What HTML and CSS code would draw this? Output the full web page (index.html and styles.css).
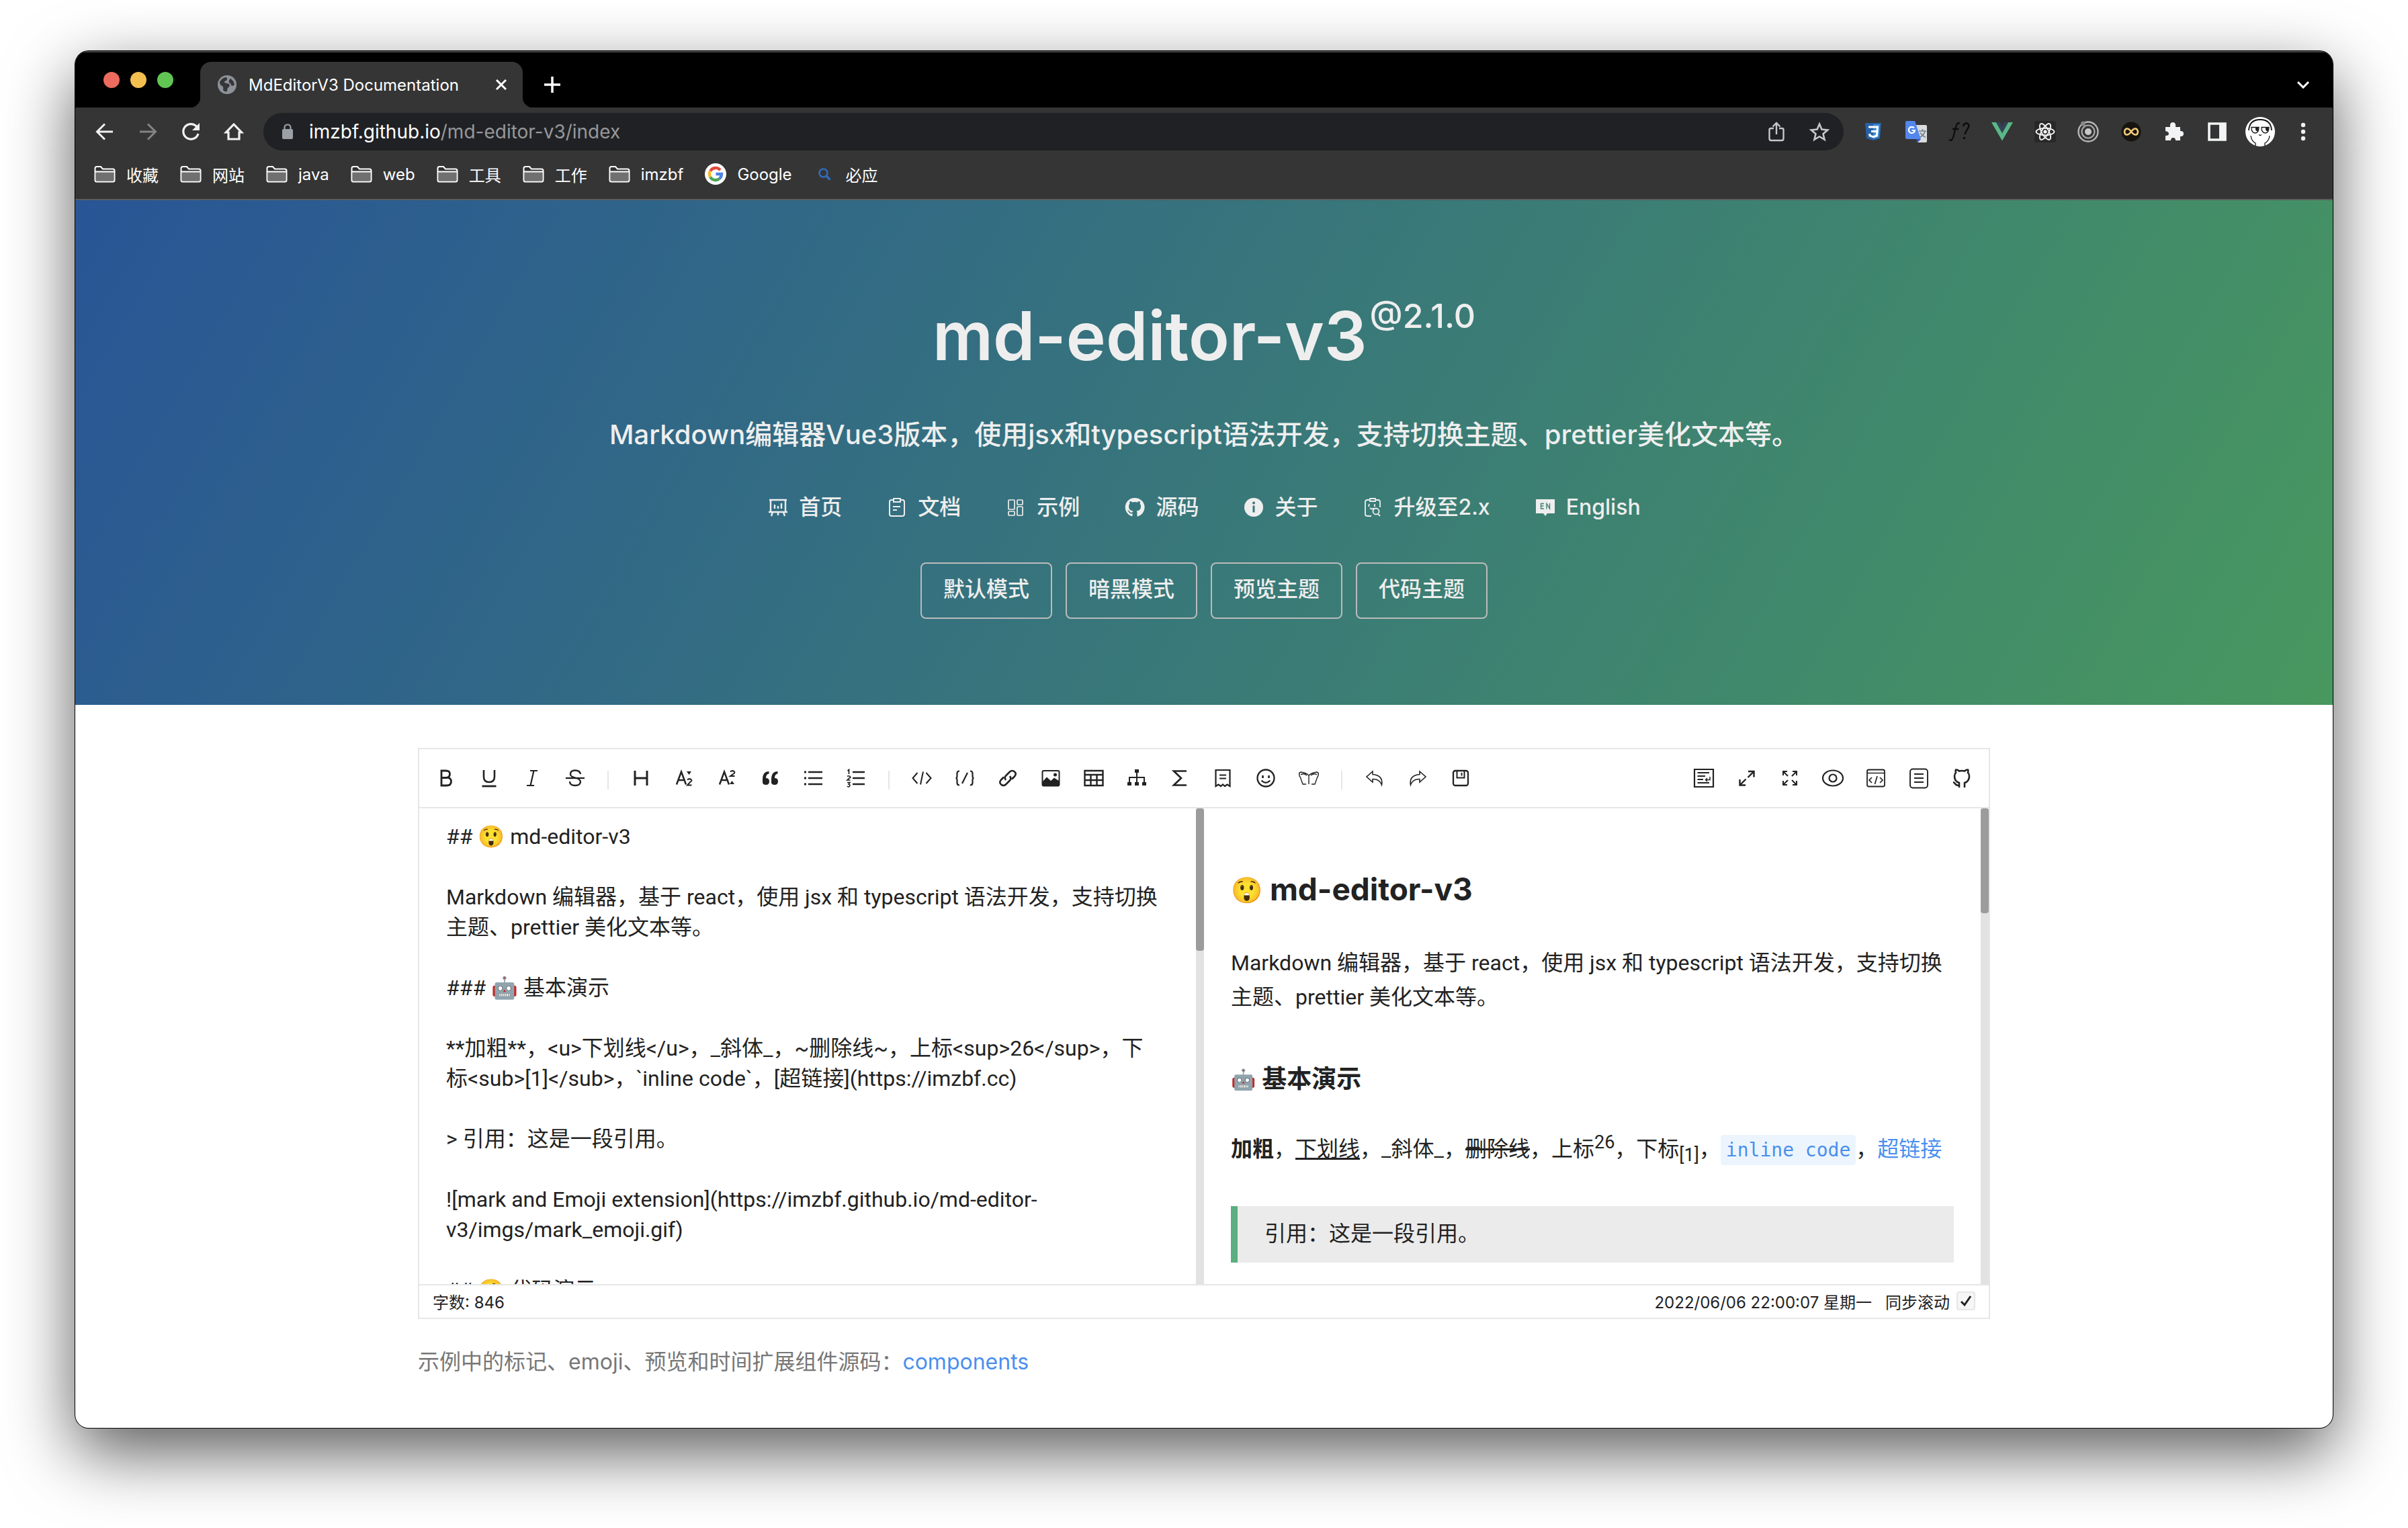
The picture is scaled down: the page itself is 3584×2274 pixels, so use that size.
FILE: index.html
```html
<!DOCTYPE html>
<html lang="zh-CN">
<head>
<meta charset="utf-8">
<title>MdEditorV3 Documentation</title>
<link rel="stylesheet" href="styles.css">
</head>
<body>
<svg class="sprite" aria-hidden="true">
  <symbol id="folder" viewBox="0 0 32 26"><path d="M1.500 22V4.500Q1.500 2 4 2H10L13 5.500H28Q30.500 5.500 30.500 8V22Q30.500 24.500 28 24.500H4Q1.500 24.500 1.500 22Z" fill="#333"/><path d="M3 10H29V23H3Z" fill="#707070"/><path d="M1.500 22V4.500Q1.500 2 4 2H10L13 5.500H28Q30.500 5.500 30.500 8V22Q30.500 24.500 28 24.500H4Q1.500 24.500 1.500 22ZM2 9.500H30" fill="none" stroke="#fff" stroke-width="2"/></symbol>
</svg>
<div class="window">
  <header class="chrome">
    <div class="tabstrip">
      <div class="lights"><span class="light red"></span><span class="light yellow"></span><span class="light green"></span></div>
      <div class="tab">
        <svg class="favicon" viewBox="0 0 28 28"><circle cx="14" cy="14" r="14" fill="#8d9299"/><path d="M3 10Q7 3 13 3Q15 5 13 8Q10 8 10 11Q14 12 17 13Q19 16 16 18Q14 19 14 24Q10 25 8 22Q9 18 7 16Q3 15 3 10ZM19 5Q24 8 25 14Q23 17 20 15Q20 12 17 11Q16 7 19 5Z" fill="#35363a"/></svg>
        <span class="tab-title">MdEditorV3 Documentation</span>
        <button class="plain" aria-label="关闭标签页"><svg width="20" height="20" viewBox="0 0 20 20"><path d="M3 3L17 17M17 3L3 17" stroke="#fff" stroke-width="3"/></svg></button>
      </div>
      <button class="plain newtab" aria-label="新标签页"><svg width="24" height="24" viewBox="0 0 24 24"><path d="M12 0V24M0 12H24" stroke="#fff" stroke-width="3.500"/></svg></button>
      <button class="plain tablist" aria-label="搜索标签页"><svg width="20" height="12" viewBox="0 0 20 12"><path d="M2 2L10 10L18 2" fill="none" stroke="#fff" stroke-width="3"/></svg></button>
    </div>
    <div class="toolbar">
      <button class="nav-btn" aria-label="后退"><svg viewBox="0 0 32 32"><path d="M28 16H5M16 4.500L4.500 16L16 27.500" fill="none" stroke="#f1f1f1" stroke-width="3"/></svg></button>
      <button class="nav-btn" aria-label="前进"><svg viewBox="0 0 32 32"><path d="M4 16H27M16 4.500L27.500 16L16 27.500" fill="none" stroke="#848484" stroke-width="3"/></svg></button>
      <button class="nav-btn" aria-label="刷新"><svg viewBox="0 0 32 32"><path d="M25.500 9.500A11.300 11.300 0 1 0 27 19" fill="none" stroke="#f1f1f1" stroke-width="3.200"/><path d="M29 3V14H18Z" fill="#f1f1f1"/></svg></button>
      <button class="nav-btn" aria-label="主页"><svg viewBox="0 0 32 32"><path d="M8 27V17H4.500L16 5L27.500 17H24V27Z" fill="none" stroke="#f1f1f1" stroke-width="3.200"/></svg></button>
      <div class="omnibox">
        <svg width="16" height="24" viewBox="0 0 16 24"><rect y="8" width="16" height="15" rx="2" fill="#9aa0a6"/><path d="M3.500 9V6Q3.500 1.500 8 1.500T12.500 6V9" fill="none" stroke="#9aa0a6" stroke-width="2.200"/></svg>
        <a class="url" href="#">imzbf.github.io<span class="path">/md-editor-v3/index</span></a>
        <button class="plain" aria-label="分享"><svg width="32" height="32" viewBox="0 0 32 32"><path d="M12 11H8Q5.500 11 5.500 13V26Q5.500 29 8 29H24Q26.500 29 26.500 26V13Q26.500 11 24 11H20M16 20V4M10.500 8.500L16 3L21.500 8.500" fill="none" stroke="#c6c7c8" stroke-width="2.400"/></svg></button>
        <button class="plain" aria-label="收藏"><svg width="32" height="32" viewBox="0 0 32 32"><path d="M16 4.500L19.400 12.600L28.200 13.400L21.500 19.200L23.600 27.800L16 23.200L8.400 27.800L10.500 19.200L3.800 13.400L12.600 12.600Z" fill="none" stroke="#c6c7c8" stroke-width="2.600"/></svg></button>
      </div>
      <div class="extensions">
        <svg viewBox="0 0 32 32"><path d="M4 3H28L26 26L16 29L6 26Z" fill="#2862a8"/><path d="M16 5H26L24.400 24.500L16 27Z" fill="#3d8fd6"/><path d="M9 9H22.500L22 15.500H13M22 15.500L21.300 22L16 23.600L11 22L10.800 19" fill="none" stroke="#fff" stroke-width="3"/></svg>
        <svg viewBox="0 0 32 32"><path d="M12 6H30Q32 6 32 8V30Q32 32 30 32H18Z" fill="#dcdcdc"/><path d="M16 27H23L18 32Z" fill="#3350bb"/><path d="M2 0H14L23 27H2Q0 27 0 25V2Q0 0 2 0Z" fill="#5387ed"/><path d="M13 10.500A4.600 4.600 0 1 0 14 14H9.500" fill="none" stroke="#fff" stroke-width="2.200"/><path d="M20 15H31M25.500 12V15M22 24Q27.500 21 29 15.500M22 17.500Q25 22 30 24.500" fill="none" stroke="#6d8390" stroke-width="1.700"/></svg>
        <svg viewBox="0 0 32 32"><path d="M1 28Q5 31 7.500 23L11 9Q12.500 2 17 3.500M6 12H15" fill="none" stroke="#0d0d0d" stroke-width="2.300"/><path d="M22 8Q23 3 27.500 3.500Q32 5 29.500 10Q26 15 24.500 20" fill="none" stroke="#0d0d0d" stroke-width="2.500"/><circle cx="23.500" cy="25.500" r="1.800" fill="#0d0d0d"/></svg>
        <svg viewBox="0 0 32 32"><path d="M0 2H7L16 18L25 2H32L16 29.500Z" fill="#5ab786"/><path d="M7 2H12.500L16 8.500L19.500 2H25L16 18Z" fill="#34435c"/></svg>
        <svg viewBox="0 0 32 32"><rect width="32" height="32" rx="3" fill="#282828"/><g fill="none" stroke="#f2f2f2" stroke-width="1.900"><ellipse cx="16" cy="16" rx="13.500" ry="5.200"/><ellipse cx="16" cy="16" rx="13.500" ry="5.200" transform="rotate(60 16 16)"/><ellipse cx="16" cy="16" rx="13.500" ry="5.200" transform="rotate(120 16 16)"/></g><circle cx="16" cy="16" r="2.600" fill="#fff"/></svg>
        <svg viewBox="0 0 32 32"><circle cx="16" cy="16" r="5" fill="#c9c9c9"/><circle cx="16" cy="16" r="9.500" fill="none" stroke="#aaa" stroke-width="2.200"/><circle cx="16" cy="16" r="14.500" fill="none" stroke="#b8b8b8" stroke-width="2.400"/><circle cx="8.500" cy="4" r="3.400" fill="#888"/></svg>
        <svg viewBox="0 0 32 32"><circle cx="16" cy="16" r="14.500" fill="#17140f"/><path d="M16 16Q12.500 11 9.500 11.500T6 16Q6.500 20.500 9.500 20.500T16 16Q19.500 11 22.500 11.500T26 16Q25.500 20.500 22.500 20.500T16 16Z" fill="none" stroke="#f0c878" stroke-width="2.600"/></svg>
        <svg viewBox="0 0 32 32"><path d="M3 9H10Q9 2 14 2T18 9H25V15Q30 14.500 30 19T25 23V29H18Q18 25 14.500 25T11 29H3V22Q8 22 8 19T3 15Z" fill="#f1f3f4"/></svg>
        <svg viewBox="0 0 32 32"><path d="M4 4H28V28H4Z" fill="#333" stroke="#f1f3f4" stroke-width="3.600"/><path d="M19 4H29V29H19Z" fill="#f1f3f4"/></svg>
        <svg class="avatar" viewBox="0 0 44 44"><circle cx="22" cy="22" r="22" fill="#fff"/><g fill="none" stroke="#151515" stroke-width="1.300"><path d="M5 20Q6 4 22 4Q38 4 39 20" stroke-width="1.800"/><path d="M9 15.500H20Q20 24 14.500 24T9 15.500ZM24 15.500H35Q35 24 29.500 24T24 15.500ZM20 26.500L22 27.500L24 26.500M8 28Q9 36 15 39V43M36 28Q35 36 29 39V43"/></g><path d="M15 16H19V21Q16 22 15 19ZM30 16H34V21Q31 22 30 19Z" fill="#222"/></svg>
        <svg viewBox="0 0 32 32" fill="#f1f1f1"><circle cx="16" cy="6" r="3.200"/><circle cx="16" cy="16" r="3.200"/><circle cx="16" cy="26" r="3.200"/></svg>
      </div>
    </div>
    <nav class="bookmarks">
      <a href="#"><svg width="32" height="26"><use href="#folder"/></svg>收藏</a>
      <a href="#"><svg width="32" height="26"><use href="#folder"/></svg>网站</a>
      <a href="#"><svg width="32" height="26"><use href="#folder"/></svg>java</a>
      <a href="#"><svg width="32" height="26"><use href="#folder"/></svg>web</a>
      <a href="#"><svg width="32" height="26"><use href="#folder"/></svg>工具</a>
      <a href="#"><svg width="32" height="26"><use href="#folder"/></svg>工作</a>
      <a href="#"><svg width="32" height="26"><use href="#folder"/></svg>imzbf</a>
      <a href="#"><svg width="32" height="32" viewBox="0 0 32 32"><circle cx="16" cy="16" r="16" fill="#fff"/><g fill="none" stroke-width="4.400"><path d="M23 10.200A9 9 0 0 0 8.200 11.500" stroke="#e04a3a"/><path d="M8.200 11.500A9 9 0 0 0 8.200 20.500" stroke="#f3bb2e"/><path d="M8.200 20.500A9 9 0 0 0 21.800 22.900" stroke="#4ba353"/><path d="M21.800 22.900Q25 20 25 16H16.500" stroke="#4e82e8"/></g></svg>Google</a>
      <a href="#"><svg width="32" height="32" viewBox="0 0 32 32"><circle cx="14.500" cy="14.500" r="6" fill="none" stroke="#2f6bbd" stroke-width="2.600"/><path d="M19 19L24.500 24.500" stroke="#2f6bbd" stroke-width="3.400"/></svg>必应</a>
    </nav>
  </header>

  <main>
    <section class="hero">
      <h1>md-editor-v3<sup>@2.1.0</sup></h1>
      <p class="tagline">Markdown编辑器Vue3版本，使用jsx和typescript语法开发，支持切换主题、prettier美化文本等。</p>
      <nav class="links">
        <a href="#"><svg viewBox="0 0 32 32" fill="none" stroke="currentColor" stroke-width="2.400"><path d="M3 5H29M5 5V23H27V5M2 23H30M8 23L6 29M16 23V28M24 23L26 29M11 12V18M16 14V18M21 10V18"/></svg>首页</a>
        <a href="#"><svg viewBox="0 0 32 32" fill="none" stroke="currentColor" stroke-width="2"><path d="M11 5H8Q5 5 5 8V26Q5 29 8 29H24Q27 29 27 26V8Q27 5 24 5H21M11 3H21V8H11ZM10 15H21M10 20H16"/></svg>文档</a>
        <a href="#"><svg viewBox="0 0 32 32" fill="none" stroke="currentColor" stroke-width="1.700"><rect x="5" y="5" width="9" height="14" rx="1"/><rect x="18" y="5" width="8" height="7" rx="1"/><rect x="5" y="22" width="9" height="6" rx="1"/><rect x="18" y="15" width="8" height="13" rx="1"/></svg>示例</a>
        <a href="#"><svg viewBox="0 0 24 24" fill="currentColor"><path d="M12 1.500a10.500 10.500 0 0 0-3.400 20.500c.5.100.8-.3.800-.6v-2.400c-2.800.5-3.500-.7-3.800-1.300-.1-.3-.7-1.300-1.100-1.600-.4-.2-1-.7 0-.7.900 0 1.500.8 1.700 1.200 1 1.700 2.600 1.200 3.300.9.100-.7.400-1.200.7-1.500-2.400-.3-4.900-1.200-4.900-5.200 0-1.100.4-2.100 1.100-2.800-.1-.3-.5-1.400.1-2.800 0 0 .9-.3 3 1.100a10 10 0 0 1 5.200 0c2-1.400 2.900-1.100 2.900-1.100.6 1.400.2 2.500.1 2.800.7.700 1.100 1.700 1.100 2.800 0 4-2.500 4.900-4.900 5.200.4.300.7 1 .7 2v3.500c0 .3.200.7.700.6A10.500 10.500 0 0 0 12 1.500Z"/></svg>源码</a>
        <a href="#"><svg viewBox="0 0 32 32"><circle cx="16" cy="16" r="14" fill="currentColor"/><circle cx="16" cy="9.500" r="2" fill="#39777a"/><path d="M16 13.500V23.500" stroke="#39777a" stroke-width="3"/></svg>关于</a>
        <a href="#"><svg viewBox="0 0 32 32" fill="none" stroke="currentColor" stroke-width="1.800"><path d="M11 5H8Q5 5 5 8V26Q5 29 8 29H14M21 5H24Q27 5 27 8V16M12 3H20V7H12ZM11 11L10 15M19 11V15M12 17Q15 20 18 17"/><circle cx="21" cy="22" r="4.500"/><path d="M24 26L27 29"/></svg>升级至2.x</a>
        <a href="#"><svg viewBox="0 0 32 32"><path d="M2 4H30V25H19L16 29L13 25H2Z" fill="currentColor"/><path d="M14 10.500H9.500V18H14M9.500 14H13.500M18 18.500V10.500L22.500 18V10" fill="none" stroke="#3d8070" stroke-width="1.400"/></svg>English</a>
      </nav>
      <div class="themes">
        <button class="theme">默认模式</button>
        <button class="theme">暗黑模式</button>
        <button class="theme">预览主题</button>
        <button class="theme">代码主题</button>
      </div>
    </section>

    <section class="demo">
      <div class="editor">
        <div class="tools">
          <button class="tool" aria-label="加粗"><svg viewBox="0 0 32 32"><path d="M9 5V27H16.500Q23.500 27 23.500 21T16.500 15.500H9H15.500Q21.500 15 21.500 10T15.500 5Z" stroke-width="2.800"/></svg></button>
          <button class="tool" aria-label="下划线"><svg viewBox="0 0 32 32"><path d="M8 4V14Q8 22 16 22T24 14V4" stroke-width="2.600"/><path d="M5.500 28H26.500" stroke-width="2.800"/></svg></button>
          <button class="tool" aria-label="斜体"><svg viewBox="0 0 32 32"><path d="M13 5H24M8 27H19M18.500 5L13.500 27" stroke-width="2.200"/></svg></button>
          <button class="tool" aria-label="删除线"><svg viewBox="0 0 32 32"><path d="M24 10Q23 4.500 16 4.500T9 10Q9 14 16 15.500T24 21Q24 27 16 27T8 21" stroke-width="2.300"/><path d="M2 16H30" stroke-width="2.300"/></svg></button>
          <span class="divider"></span>
          <button class="tool" aria-label="标题"><svg viewBox="0 0 32 32"><path d="M7 5V27M25 5V27M7 16H25" stroke-width="3"/></svg></button>
          <button class="tool" aria-label="下标"><svg viewBox="0 0 32 32"><path d="M5 25.500L12 6.500L19 25.500M7.500 19H16.500" stroke-width="2.500"/><path d="M21 18.500Q24 16 26.500 18T25 22L21 26.500H27.500" stroke-width="2"/><path d="M20 6H27L23.500 11Z" fill="currentColor" stroke="none"/></svg></button>
          <button class="tool" aria-label="上标"><svg viewBox="0 0 32 32"><path d="M5 25.500L12 6.500L19 25.500M7.500 19H16.500" stroke-width="2.500"/><path d="M21 6.500Q24 4 26.500 6T25 10L21 13H27.500" stroke-width="2"/><path d="M20 25H27L23.500 20Z" fill="currentColor" stroke="none"/></svg></button>
          <button class="tool" aria-label="引用"><svg viewBox="0 0 32 32"><path d="M14.500 6Q5 6 5 18V22Q5 26 10 26T15 21T10 16Q10 10 14.500 9.500ZM27.500 6Q18 6 18 18V22Q18 26 23 26T28 21T23 16Q23 10 27.500 9.500Z" fill="currentColor" stroke="none"/></svg></button>
          <button class="tool" aria-label="无序列表"><svg viewBox="0 0 32 32"><path d="M9 7H30M9 16H30M9 25H30" stroke-width="2.500"/><path d="M3 7H6M3 16H6M3 25H6" stroke-width="3.200"/></svg></button>
          <button class="tool" aria-label="有序列表"><svg viewBox="0 0 32 32"><path d="M11 7H29M11 16H29M11 25H29" stroke-width="2.300"/><path d="M3.500 5L5.500 3.500V10M3 13.500Q5 12 7 13.500T6 16L3 19H7.500M3 22.500H7L5 25Q8 26 6.500 28T3 28" stroke-width="1.700"/></svg></button>
          <span class="divider"></span>
          <button class="tool" aria-label="行内代码"><svg viewBox="0 0 32 32"><path d="M9.500 8L2.500 16L9.500 24M22.500 8L29.500 16L22.500 24M18 6.500L14 25.500" stroke-width="2"/></svg></button>
          <button class="tool" aria-label="块级代码"><svg viewBox="0 0 32 32"><path d="M8 5.500Q4.500 5.500 4.500 9V13Q4.500 16 2.500 16Q4.500 16 4.500 19V23Q4.500 26.500 8 26.500M24 5.500Q27.500 5.500 27.500 9V13Q27.500 16 29.500 16Q27.500 16 27.500 19V23Q27.500 26.500 24 26.500M20 8L12 24" stroke-width="2.200"/></svg></button>
          <button class="tool" aria-label="链接"><svg viewBox="0 0 32 32"><path d="M13 19Q10 15 13.500 12L19 6.500Q22.500 3.500 26 6.500T26 13.500L22 17.500M19 13Q22 17 18.500 20L13 25.500Q9.500 28.500 6 25.500T6 18.500L10 14.500" stroke-width="2.600"/></svg></button>
          <button class="tool" aria-label="图片"><svg viewBox="0 0 32 32"><rect x="3.500" y="5" width="25" height="22.500" rx="2" stroke-width="2"/><path d="M4 21L10 14.500L16 20L21 15.500L28 20V27H4Z" fill="currentColor" stroke="none"/><circle cx="22.500" cy="11" r="2.500" fill="currentColor" stroke="none"/></svg></button>
          <button class="tool" aria-label="表格"><svg viewBox="0 0 32 32"><path d="M2.500 5H29.500V27H2.500ZM2.500 11H29.500M2.500 19H29.500M11.500 11V27M20.500 11V27" stroke-width="2.400"/></svg></button>
          <button class="tool" aria-label="mermaid图"><svg viewBox="0 0 32 32"><path d="M16 7V22M5 23V15H27V23" stroke-width="2"/><path d="M13 3H19V8H13ZM2 22H8V27H2ZM13 22H19V27H13ZM24 22H30V27H24Z" fill="currentColor" stroke="none"/></svg></button>
          <button class="tool" aria-label="公式"><svg viewBox="0 0 32 32"><path d="M26 5.500H7L18 16L7 26.500H26" stroke-width="2.600"/></svg></button>
          <button class="tool" aria-label="标记"><svg viewBox="0 0 32 32"><path d="M5.500 28V4H26.500V28L22.500 25.500L19 28L16 25.500L13 28L9.500 25.500ZM11 11.500H21M11 16.500H21" stroke-width="2.200"/></svg></button>
          <button class="tool" aria-label="emoji"><svg viewBox="0 0 32 32"><circle cx="16" cy="16" r="12.500" stroke-width="2.300"/><path d="M11.500 12V16M20.500 12V16" stroke-width="2.600"/><path d="M9.500 19.500Q16 26 22.500 19.500" stroke-width="2.200"/></svg></button>
          <button class="tool" aria-label="预览"><svg viewBox="0 0 32 32"><path d="M16 12Q12 8 4 7L2 8Q1 12 3.500 15L7 25H12M16 12Q20 8 28 7L30 8Q31 12 28.500 15L25 25H20M16 12V25M4 11Q8 8 13 12M28 11Q24 8 19 12" stroke-width="1.400"/></svg></button>
          <span class="divider"></span>
          <button class="tool" aria-label="后退"><svg viewBox="0 0 32 32"><path d="M13 6L4 14L13 22V17.500Q23 17 26.500 26Q29 12 13 10.500Z" stroke-width="1.600"/></svg></button>
          <button class="tool" aria-label="前进"><svg viewBox="0 0 32 32"><path d="M19 6L28 14L19 22V17.500Q9 17 5.500 26Q3 12 19 10.500Z" stroke-width="1.600"/></svg></button>
          <button class="tool" aria-label="保存"><svg viewBox="0 0 32 32"><rect x="5" y="5" width="22" height="22" rx="3" stroke-width="2.300"/><path d="M10.500 5V15.500H21.500V5M17.500 8V12.500" stroke-width="2"/></svg></button>
          <span class="spacer"></span>
          <button class="tool" aria-label="美化"><svg viewBox="0 0 32 32"><path d="M2 3H30V29H2Z" stroke-width="2.200"/><path d="M6.500 8H24M6.500 13H18M6.500 18H15M6.500 23H24" stroke-width="2"/><path d="M25 14V18.500H19M21 16L18.500 18.500L21 21" stroke-width="1.500"/></svg></button>
          <button class="tool" aria-label="浏览器内全屏"><svg viewBox="0 0 32 32"><path d="M18 6H26.500V14.500M26 6.500L17.500 15M14 26.500H5.500V18M6 26L14.500 17.500" stroke-width="2.400"/></svg></button>
          <button class="tool" aria-label="屏幕全屏"><svg viewBox="0 0 32 32"><path d="M6 12V6H12M6.500 6.500L13 13M20 6H26V12M25.500 6.500L19 13M6 20V26H12M6.500 25.500L13 19M26 20V26H20M25.500 25.500L19 19" stroke-width="2"/></svg></button>
          <button class="tool" aria-label="预览"><svg viewBox="0 0 32 32"><ellipse cx="16" cy="16" rx="15" ry="11.500" stroke-width="2.200"/><circle cx="16" cy="16" r="5.500" stroke-width="2.200"/></svg></button>
          <button class="tool" aria-label="html代码预览"><svg viewBox="0 0 32 32"><rect x="3" y="3.500" width="26" height="25" rx="2.500" stroke-width="1.800"/><path d="M3 8.500H29M10 15L6 19L10 23M22 15L26 19L22 23M18 13L14.500 25" stroke-width="1.700"/></svg></button>
          <button class="tool" aria-label="目录"><svg viewBox="0 0 32 32"><rect x="3" y="2.500" width="26" height="28" rx="4" stroke-width="1.900"/><path d="M9 10H23M9 16H23M9 22H23" stroke-width="1.900"/></svg></button>
          <button class="tool" aria-label="源码地址"><svg viewBox="0 0 32 32"><path d="M12 30V23Q5 21 5 13Q5 9.500 7 8Q6 5 7 3.500Q10 3.500 12 5.500Q16 4.500 20 5.500Q22 3.500 25 3.500Q26 5 25 8Q27 9.500 27 13Q27 21 20 23V30M12 26.500Q8 27.500 6.500 25T3 22" stroke-width="2.600"/></svg></button>
        </div>
        <div class="panes">
          <div class="pane">
            <textarea class="source" wrap="off" spellcheck="false" aria-label="Markdown">
## 😲 md-editor-v3

Markdown 编辑器，基于 react，使用 jsx 和 typescript 语法开发，支持切换
主题、prettier 美化文本等。

### 🤖 基本演示

**加粗**，&lt;u&gt;下划线&lt;/u&gt;，_斜体_，~删除线~，上标&lt;sup&gt;26&lt;/sup&gt;，下
标&lt;sub&gt;[1]&lt;/sub&gt;，`inline code`，[超链接](https://imzbf.cc)

&gt; 引用：这是一段引用。

![mark and Emoji extension](https://imzbf.github.io/md-editor-
v3/imgs/mark_emoji.gif)

## 🤗 代码演示</textarea>
            <div class="track"><div class="thumb thumb-source"></div></div>
          </div>
          <div class="pane">
            <article class="preview">
              <h2><span class="emoji">😲</span> md-editor-v3</h2>
              <p>Markdown 编辑器，基于 react，使用 jsx 和 typescript 语法开发，支持切换<br>主题、prettier 美化文本等。</p>
              <h3><span class="emoji">🤖</span> 基本演示</h3>
              <p class="styles"><strong>加粗</strong>，<u>下划线</u>，_斜体_，<del>删除线</del>，上标<sup>26</sup>，下标<sub>[1]</sub>，<code>inline code</code>，<a href="#">超链接</a></p>
              <blockquote>引用：这是一段引用。</blockquote>
            </article>
            <div class="track"><div class="thumb thumb-preview"></div></div>
          </div>
        </div>
        <footer class="status">
          <span>字数: 846</span>
          <span class="spacer"></span>
          <span>2022/06/06 22:00:07 星期一</span>
          <label class="sync">同步滚动 <input type="checkbox" checked></label>
        </footer>
      </div>
      <p class="note">示例中的标记、emoji、预览和时间扩展组件源码：<a href="#">components</a></p>
    </section>
  </main>
</div>
</body>
</html>
```
FILE: styles.css
```css
* { box-sizing: border-box; }
body {
  margin: 0;
  padding: 76px 112px 148px;
  background: #fff;
  color: #222;
  font-family: Inter, "Noto Sans CJK SC", sans-serif;
}
a { color: inherit; text-decoration: none; }
button { margin: 0; font: inherit; color: inherit; cursor: pointer; }
svg { display: block; flex: none; }
.sprite { width: 0; height: 0; position: absolute; }
.plain { display: block; padding: 0; border: 0; background: none; }
.spacer { flex: 1; }

.window {
  border-radius: 20px;
  overflow: hidden;
  background: #fff;
  box-shadow: 0 0 0 1px #000, 0 36px 100px rgba(0, 0, 0, 0.65);
}

/* browser chrome */
.chrome { background: #353535; color: #fff; border-bottom: 2px solid #5c5c5c; }
.tabstrip {
  display: flex;
  align-items: flex-end;
  height: 84px;
  padding: 0 34px 0 42px;
  background: #000;
  border-top: 2px solid #4a4a4a;
}
.lights { display: flex; gap: 16px; margin-bottom: 29px; }
.light { width: 24px; height: 24px; border-radius: 50%; }
.red { background: #ec6a5e; }
.yellow { background: #f4bf4f; }
.green { background: #61c554; }
.tab {
  position: relative;
  display: flex;
  align-items: center;
  width: 480px;
  height: 68px;
  margin-left: 40px;
  padding: 0 22px 0 26px;
  border-radius: 16px 16px 0 0;
  background: #353535;
}
.tab::before, .tab::after {
  content: "";
  position: absolute;
  bottom: 0;
  width: 16px;
  height: 16px;
}
.tab::before { right: 100%; background: radial-gradient(circle at 0 0, #000 16px, #353535 17px); }
.tab::after { left: 100%; background: radial-gradient(circle at 100% 0, #000 16px, #353535 17px); }
.favicon { width: 28px; height: 28px; margin-right: 18px; }
.tab-title { flex: 1; font-size: 24px; white-space: nowrap; }
.newtab { margin: 0 0 22px 32px; }
.tablist { margin: 0 0 28px auto; }

.toolbar {
  display: flex;
  align-items: center;
  gap: 32px;
  padding: 8px 28px;
}
.nav-btn { display: block; width: 32px; padding: 0; border: 0; background: none; }
.nav-btn svg { width: 32px; height: 32px; }
.omnibox {
  flex: 1;
  display: flex;
  align-items: center;
  gap: 32px;
  height: 56px;
  margin-left: -4px;
  padding: 0 20px 0 28px;
  border-radius: 28px;
  background: #202124;
  font-size: 28px;
}
.url { flex: 1; margin-left: -8px; }
.path { color: #96989b; }
.extensions { display: flex; align-items: center; gap: 32px; margin-left: -4px; }
.extensions svg { width: 32px; height: 32px; }
.extensions .avatar { width: 44px; height: 44px; margin: 0 -6px; }

.bookmarks {
  display: flex;
  align-items: center;
  gap: 32px;
  height: 64px;
  padding: 0 28px 10px;
  font-size: 24px;
}
.bookmarks a { display: flex; align-items: center; gap: 16px; }

/* page header */
.hero {
  display: flex;
  flex-direction: column;
  align-items: center;
  padding: 142px 0 128px;
  background: linear-gradient(120deg, #285596, #48985f);
  color: #eee;
  font-weight: 500;
}
h1 { margin: 0; font-size: 100px; line-height: 120px; font-weight: 600; }
h1 sup { margin-left: 4px; font-size: 50px; line-height: 0; font-weight: 500; vertical-align: 48px; }
.tagline { margin: 57px 0 58px; font-size: 40px; line-height: 60px; }
.links { display: flex; gap: 66px; font-size: 32px; line-height: 40px; }
.links a { display: flex; align-items: center; gap: 15px; }
.links svg { width: 32px; height: 32px; }
.themes { display: flex; gap: 20px; margin-top: 62px; }
.theme {
  padding: 18px 32px 22px;
  border: 2px solid #bbb;
  border-radius: 8px;
  background: none;
  font-size: 32px;
  line-height: 40px;
}

/* editor */
.demo { max-width: 2340px; margin: 0 auto; padding: 64px 0 74px; }
.editor { border: 2px solid #e6e6e6; }
.tools {
  display: flex;
  align-items: center;
  gap: 32px;
  height: 88px;
  padding: 0 24px;
  border-bottom: 2px solid #e6e6e6;
}
.tool { width: 32px; padding: 0; border: 0; background: none; }
.tool svg { width: 32px; height: 32px; fill: none; stroke: currentColor; }
.divider { width: 2px; height: 28px; margin-top: 6px; background: #e6e6e6; }
.panes { display: flex; height: 708px; }
.pane { flex: 1; display: flex; min-width: 0; }
.source {
  flex: 1;
  min-width: 0;
  padding: 20px 40px 0;
  border: 0;
  outline: 0;
  resize: none;
  overflow: hidden;
  background: none;
  color: inherit;
  font: 32px/45px Roboto, "Noto Sans CJK SC", sans-serif;
}
.track { width: 12px; background: #e2e2e2; }
.thumb { border-radius: 4px; background: #9c9c9c; }
.thumb-source { height: 30%; }
.thumb-preview { height: 22%; }
.preview {
  flex: 1;
  min-width: 0;
  padding: 0 40px;
  overflow: hidden;
  font: 32px/51px Roboto, "Noto Sans CJK SC", sans-serif;
  white-space: nowrap;
}
.preview h2 { margin: 88px 0 53px; font-family: Inter, sans-serif; font-size: 46px; line-height: 64px; }
.preview h2 .emoji { font-size: 38px; line-height: 0; vertical-align: 2px; }
.preview p { margin: 0 0 67px; }
.preview h3 { margin: 0 0 48px; font-size: 37px; line-height: 60px; }
.preview h3 .emoji { font-size: 30px; line-height: 0; vertical-align: 2px; }
.preview .styles { margin-bottom: 59px; }
.preview sup, .preview sub { font-size: 27px; line-height: 0; }
.preview a { color: #4a8fee; }
.preview code {
  padding: 6px 8px;
  border-radius: 4px;
  background: #ecf5fd;
  color: #4a8fee;
  font: 28px/32px "DejaVu Sans Mono", monospace;
}
.preview blockquote { margin: 0; padding: 16px 40px 17px; border-left: 10px solid #5bae7f; background: #ebebeb; }
.status {
  display: flex;
  align-items: center;
  gap: 20px;
  height: 50px;
  padding: 0 20px 2px;
  border-top: 2px solid #e6e6e6;
  font-size: 24px;
}
.sync { display: flex; align-items: center; gap: 10px; }
.sync input {
  appearance: none;
  width: 28px;
  height: 28px;
  margin: 0;
  border: 2px solid #e6e6e6;
  border-radius: 4px;
  background: #f6f6f6 url('data:image/svg+xml,<svg xmlns="http://www.w3.org/2000/svg" viewBox="0 0 24 24"><path d="M5 13L10 18L19 5" fill="none" stroke="%23222" stroke-width="3"/></svg>') center / 24px;
}
.note { margin: 40px 0 0; color: #777; font-size: 32px; line-height: 48px; }
.note a { color: #4a8fee; }
```
